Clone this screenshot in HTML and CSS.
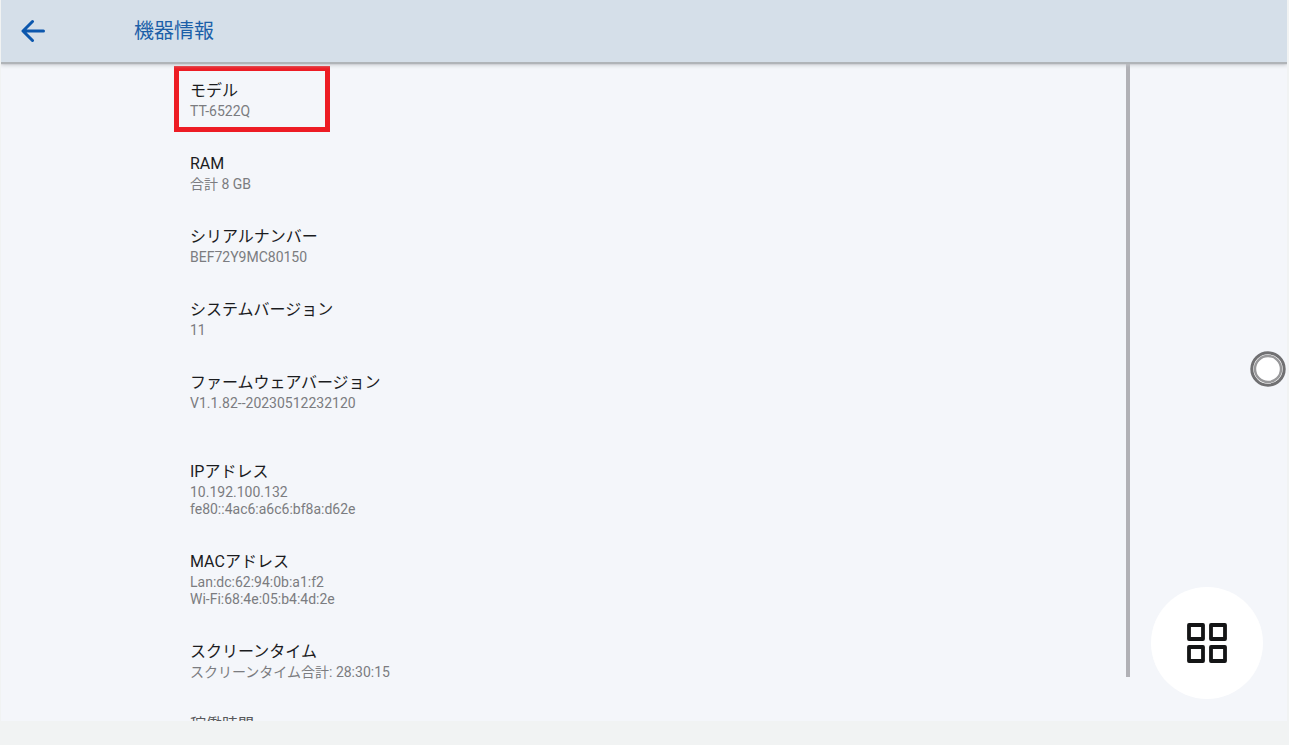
FILE: index.html
```
<!DOCTYPE html>
<html lang="ja">
<head>
<meta charset="utf-8">
<meta name="viewport" content="width=device-width, initial-scale=1">
<title>機器情報</title>
<link rel="stylesheet" href="styles.css">
</head>
<body>
<div class="screen">
  <header class="topbar">
    <button class="back" type="button" aria-label="戻る">
      <svg width="24" height="24" viewBox="0 0 24 24" fill="none" stroke="currentColor" stroke-width="3" stroke-linecap="round" stroke-linejoin="round"><path d="M22.500 12H2.500M11.500 2.500L2 12L11.500 21.500"/></svg>
    </button>
    <h1 class="heading">機器情報</h1>
  </header>
  <main class="content">
    <dl class="list">
      <div class="item marked"><dt>モデル</dt><dd>TT-6522Q</dd></div>
      <div class="item"><dt>RAM</dt><dd>合計 8 GB</dd></div>
      <div class="item"><dt>シリアルナンバー</dt><dd>BEF72Y9MC80150</dd></div>
      <div class="item"><dt>システムバージョン</dt><dd>11</dd></div>
      <div class="item two-line"><dt>ファームウェアバージョン</dt><dd>V1.1.82--20230512232120</dd></div>
      <div class="item"><dt>IPアドレス</dt><dd>10.192.100.132</dd><dd>fe80::4ac6:a6c6:bf8a:d62e</dd></div>
      <div class="item"><dt>MACアドレス</dt><dd>Lan:dc:62:94:0b:a1:f2</dd><dd>Wi-Fi:68:4e:05:b4:4d:2e</dd></div>
      <div class="item"><dt>スクリーンタイム</dt><dd>スクリーンタイム合計: 28:30:15</dd></div>
      <div class="item"><dt class="faded">稼働時間</dt></div>
    </dl>
    <div class="scrollbar"></div>
  </main>
  <button class="assist" type="button" aria-label="アシスト">
    <svg width="36" height="36" viewBox="0 0 36 36"><circle cx="18" cy="18" r="16.200" fill="#fff" stroke="#707072" stroke-width="3"/><circle cx="18" cy="18" r="13" fill="#fff" stroke="#98989a" stroke-width="2.400"/></svg>
  </button>
  <button class="apps" type="button" aria-label="アプリ">
    <svg width="40" height="40" viewBox="0 0 40 40" fill="none" stroke="#141516" stroke-width="3.800" stroke-linejoin="round"><path d="M2 2h14v14H2zM24 2h14v14H24zM2 24h14v14H2zM24 24h14v14H24z"/></svg>
  </button>
</div>
</body>
</html>
```
FILE: styles.css
```
*, *::before { box-sizing: border-box; }

body {
  margin: 0;
  min-height: 100vh;
  background: #f1f3f3;
  font-family: Roboto, "Noto Sans CJK JP", sans-serif;
}

button {
  margin: 0;
  padding: 0;
  border: 0;
  background: none;
  cursor: pointer;
}

svg { display: block; }

.screen {
  position: relative;
  display: flex;
  flex-direction: column;
  height: calc(100vh - 24px);
  margin: 0 2px 0 1px;
  overflow: hidden;
  background: #f4f6fa;
}

.topbar {
  z-index: 1;
  display: flex;
  flex: none;
  align-items: center;
  gap: 89px;
  height: 62px;
  padding: 0 20px 1px;
  background: #d5dfe9;
  box-shadow: 0 2px 1px #b0b4b8, 0 3px 4px #c4c7cb;
}

.back { color: #0c57ad; }

.heading {
  margin: 0;
  font-size: 20px;
  font-weight: 400;
  line-height: 30px;
  color: #1c5fa8;
}

.content {
  display: flex;
  flex: 1;
  min-height: 0;
  padding: 0 157px 0 189px;
}

.list {
  flex: 1;
  margin: 0;
}

.item {
  position: relative;
  padding: 18px 0 15px;
}

.two-line { padding-bottom: 31px; }

.item dt {
  margin-bottom: 1px;
  font-size: 16px;
  line-height: 22px;
  color: #1b1c1e;
}

.item .faded { color: #58595c; }

.item dd {
  margin: 0;
  font-size: 14px;
  line-height: 17px;
  color: #7b7c80;
}

.marked::before {
  content: "";
  position: absolute;
  top: 4px;
  left: -16px;
  width: 156px;
  height: 66px;
  border: 5px solid #ed1c24;
}

.scrollbar {
  width: 4px;
  margin-bottom: 44px;
  background: #b1b1b6;
}

.assist {
  position: absolute;
  top: 351px;
  right: 1px;
}

.apps {
  position: absolute;
  right: 24px;
  bottom: 22px;
  display: grid;
  place-items: center;
  width: 112px;
  height: 112px;
  border-radius: 50%;
  background: #fff;
}
```
